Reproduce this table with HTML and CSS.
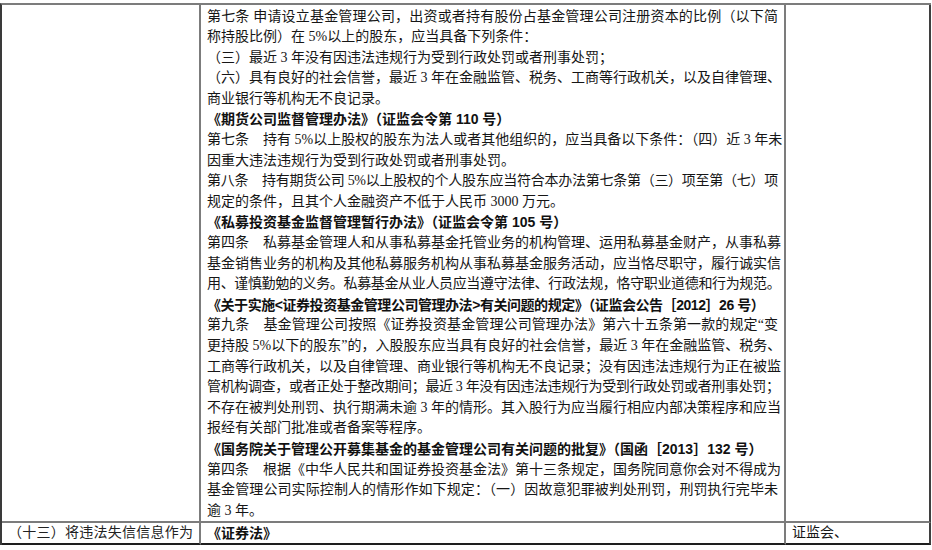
FILE: index.html
```html
<!DOCTYPE html>
<html lang="zh-CN">
<head>
<meta charset="utf-8">
<title>法规对照表</title>
<link rel="stylesheet" href="styles.css">
</head>
<body>
<div class="sheet">
  <div class="cell c1"></div>
  <div class="cell c2 body">
    <p class="para">
      <span class="ln">第七条 申请设立基金管理公司，出资或者持有股份占基金管理公司注册资本的比例（以下简</span>
      <span class="ln">称持股比例）在 5%以上的股东，应当具备下列条件：</span>
    </p>
    <p class="para"><span class="ln">（三）最近 3 年没有因违法违规行为受到行政处罚或者刑事处罚；</span></p>
    <p class="para">
      <span class="ln">（六）具有良好的社会信誉，最近 3 年在金融监管、税务、工商等行政机关，以及自律管理、</span>
      <span class="ln">商业银行等机构无不良记录。</span>
    </p>
    <h3 class="law">《期货公司监督管理办法》（证监会令第 110 号）</h3>
    <p class="para">
      <span class="ln">第七条　持有 5%以上股权的股东为法人或者其他组织的，应当具备以下条件：（四）近 3 年未</span>
      <span class="ln">因重大违法违规行为受到行政处罚或者刑事处罚。</span>
    </p>
    <p class="para">
      <span class="ln tight">第八条　持有期货公司 5%以上股权的个人股东应当符合本办法第七条第（三）项至第（七）项</span>
      <span class="ln">规定的条件，且其个人金融资产不低于人民币 3000 万元。</span>
    </p>
    <h3 class="law">《私募投资基金监督管理暂行办法》（证监会令第 105 号）</h3>
    <p class="para">
      <span class="ln">第四条　私募基金管理人和从事私募基金托管业务的机构管理、运用私募基金财产，从事私募</span>
      <span class="ln">基金销售业务的机构及其他私募服务机构从事私募基金服务活动，应当恪尽职守，履行诚实信</span>
      <span class="ln tight full">用、谨慎勤勉的义务。私募基金从业人员应当遵守法律、行政法规，恪守职业道德和行为规范。</span>
    </p>
    <h3 class="law tight">《关于实施&lt;证券投资基金管理公司管理办法&gt;有关问题的规定》（证监会公告［2012］26 号）</h3>
    <p class="para">
      <span class="ln">第九条　基金管理公司按照《证券投资基金管理公司管理办法》第六十五条第一款的规定“变</span>
      <span class="ln">更持股 5%以下的股东”的，入股股东应当具有良好的社会信誉，最近 3 年在金融监管、税务、</span>
      <span class="ln">工商等行政机关，以及自律管理、商业银行等机构无不良记录；没有因违法违规行为正在被监</span>
      <span class="ln tight">管机构调查，或者正处于整改期间；最近 3 年没有因违法违规行为受到行政处罚或者刑事处罚；</span>
      <span class="ln">不存在被判处刑罚、执行期满未逾 3 年的情形。其入股行为应当履行相应内部决策程序和应当</span>
      <span class="ln">报经有关部门批准或者备案等程序。</span>
    </p>
    <h3 class="law">《国务院关于管理公开募集基金的基金管理公司有关问题的批复》（国函［2013］132 号）</h3>
    <p class="para">
      <span class="ln">第四条　根据《中华人民共和国证券投资基金法》第十三条规定，国务院同意你会对不得成为</span>
      <span class="ln">基金管理公司实际控制人的情形作如下规定：（一）因故意犯罪被判处刑罚，刑罚执行完毕未</span>
      <span class="ln">逾 3 年。</span>
    </p>
  </div>
  <div class="cell c3"></div>

  <div class="cell c1 row2"><span class="fill">（十三）将违法失信信息作为</span></div>
  <div class="cell c2 row2"><h3 class="law">《证券法》</h3></div>
  <div class="cell c3 row2">证监会、</div>
</div>
</body>
</html>
```

FILE: styles.css
```css
* { box-sizing: border-box; }

html, body { background: #ffffff; }

body {
  margin: 0;
  padding-top: 3px;
  font-family: "Liberation Serif", "Noto Sans CJK SC", serif;
  font-size: 14px;
  line-height: 20.6px;
  color: #161616;
}

.sheet {
  display: grid;
  grid-template-columns: 199px 585px 145px;
  width: 931px;
  border-top: 2px solid #7c7c7c;
  border-left: 2px solid #3a3a3a;
}

.cell {
  border-right: 2px solid #7c7c7c;
  border-bottom: 2px solid #7c7c7c;
  padding: 0 6px;
  overflow: hidden;
}

.body { padding-top: 1.5px; }

.c3 { border-right-color: #3f3f3f; }

.row2 {
  height: 22px;
  padding-top: 0;
  border-bottom-color: #1e1e1e;
}

.para { margin: 0; }

.ln {
  display: block;
  white-space: nowrap;
  text-align: justify;
  text-align-last: justify;
}

.para .ln:last-child { text-align-last: auto; }
.para .ln.full:last-child { text-align-last: justify; }

.tight { letter-spacing: -0.35px; }

.law {
  margin: 0;
  font-family: "Liberation Sans", "Noto Sans CJK SC", sans-serif;
  font-size: 14px;
  font-weight: 700;
  line-height: 20.6px;
  white-space: nowrap;
  color: #111;
}

.law.tight { letter-spacing: -0.45px; }

.fill {
  display: block;
  text-align: justify;
  text-align-last: justify;
  color: #222;
}
```
